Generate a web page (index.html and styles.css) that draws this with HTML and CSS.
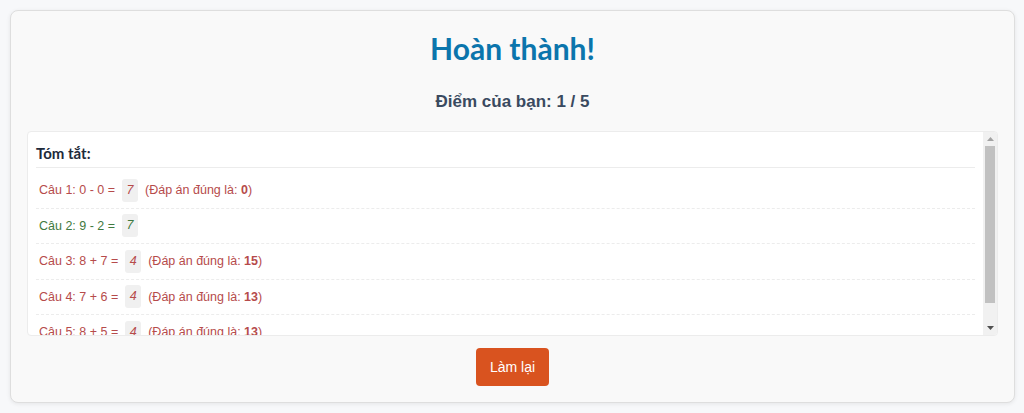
FILE: index.html
```html
<!DOCTYPE html>
<html lang="vi">
<head>
<meta charset="utf-8">
<title>Hoàn thành!</title>
<link rel="stylesheet" href="styles.css">
</head>
<body>
<main class="card">
  <h1 class="title">Hoàn thành!</h1>
  <p class="score">Điểm của bạn: 1 / 5</p>
  <section class="summary">
    <div class="summary-body">
      <h2 class="summary-title">Tóm tắt:</h2>
      <ul class="list">
        <li class="item wrong"><span>Câu 1: 0 - 0 =</span><span class="ans">7</span><span class="fix">(Đáp án đúng là: <b>0</b>)</span></li>
        <li class="item right"><span>Câu 2: 9 - 2 =</span><span class="ans">7</span></li>
        <li class="item wrong"><span>Câu 3: 8 + 7 =</span><span class="ans">4</span><span class="fix">(Đáp án đúng là: <b>15</b>)</span></li>
        <li class="item wrong"><span>Câu 4: 7 + 6 =</span><span class="ans">4</span><span class="fix">(Đáp án đúng là: <b>13</b>)</span></li>
        <li class="item wrong"><span>Câu 5: 8 + 5 =</span><span class="ans">4</span><span class="fix">(Đáp án đúng là: <b>13</b>)</span></li>
      </ul>
    </div>
    <div class="scrollbar" aria-hidden="true">
      <span class="sb-btn"><svg width="7" height="4" viewBox="0 0 7 4"><polygon points="0,4 3.5,0 7,4" fill="#a3a3a3"/></svg></span>
      <span class="sb-track"><span class="sb-thumb"></span></span>
      <span class="sb-btn"><svg width="7" height="4" viewBox="0 0 7 4"><polygon points="0,0 7,0 3.5,4" fill="#505050"/></svg></span>
    </div>
  </section>
  <div class="actions">
    <button class="btn" type="button">Làm lại</button>
  </div>
</main>
</body>
</html>
```

FILE: styles.css
```css
html, body {
  margin: 0;
  padding: 0;
}
body {
  background: #f7f8fa;
  padding: 10px 9px 10px 10px;
  font-family: "Liberation Sans", Arial, sans-serif;
}
.card {
  background: #f9f9f9;
  border: 1px solid #dedede;
  border-radius: 8px;
  box-shadow: 0 1px 4px rgba(0,0,0,0.08);
  padding: 16px;
  height: 393px;
  box-sizing: border-box;
}
.title {
  margin: 3px 0 0;
  text-align: center;
  font-family: Lato, "Liberation Sans", sans-serif;
  font-weight: 700;
  font-size: 30px;
  line-height: 36px;
  color: #0b75ac;
}
.score {
  margin: 25px 0 0;
  text-align: center;
  font-weight: 700;
  font-size: 17px;
  line-height: 21px;
  color: #3a4a60;
}
.summary {
  display: flex;
  margin-top: 19px;
  height: 205px;
  box-sizing: border-box;
  background: #fff;
  border: 1px solid #ececec;
  border-radius: 4px;
  overflow: hidden;
}
.summary-body {
  flex: 1;
  min-width: 0;
  padding: 0 8px;
  overflow: hidden;
}
.scrollbar {
  width: 14px;
  flex: none;
  display: flex;
  flex-direction: column;
  background: #f1f1f1;
}
.sb-btn {
  height: 14px;
  flex: none;
  display: flex;
  align-items: center;
  justify-content: center;
}
.sb-track {
  flex: 1;
  display: flex;
  flex-direction: column;
}
.sb-thumb {
  height: 157px;
  margin: 0 2px;
  background: #c1c1c1;
}
.summary-title {
  margin: 0;
  padding: 12px 0 5px;
  border-bottom: 1px solid #ececec;
  font-family: Lato, "Liberation Sans", sans-serif;
  font-weight: 700;
  font-size: 15px;
  line-height: 18px;
  color: #1e2a3a;
}
.list {
  list-style: none;
  margin: 5px 0 0;
  padding: 0;
}
.item {
  display: flex;
  align-items: center;
  height: 35.5px;
  box-sizing: border-box;
  padding-left: 3px;
  border-bottom: 1px dashed #ececec;
  font-size: 12.5px;
  white-space: nowrap;
}
.wrong { color: #b64b4b; }
.right { color: #3f7a40; }
.ans {
  display: inline-block;
  margin-left: 7px;
  padding: 4px 4.5px;
  background: #f0f0f0;
  border-radius: 3px;
  font-style: italic;
  line-height: 15px;
}
.fix {
  margin-left: 7px;
}
.fix b { font-weight: 700; }
.actions {
  display: flex;
  justify-content: center;
  margin-top: 12px;
}
.btn {
  background: #d9531f;
  color: #fff;
  border: none;
  border-radius: 4px;
  font-family: "Liberation Sans", Arial, sans-serif;
  font-size: 14px;
  height: 38px;
  padding: 0 14px;
  cursor: pointer;
}
```
